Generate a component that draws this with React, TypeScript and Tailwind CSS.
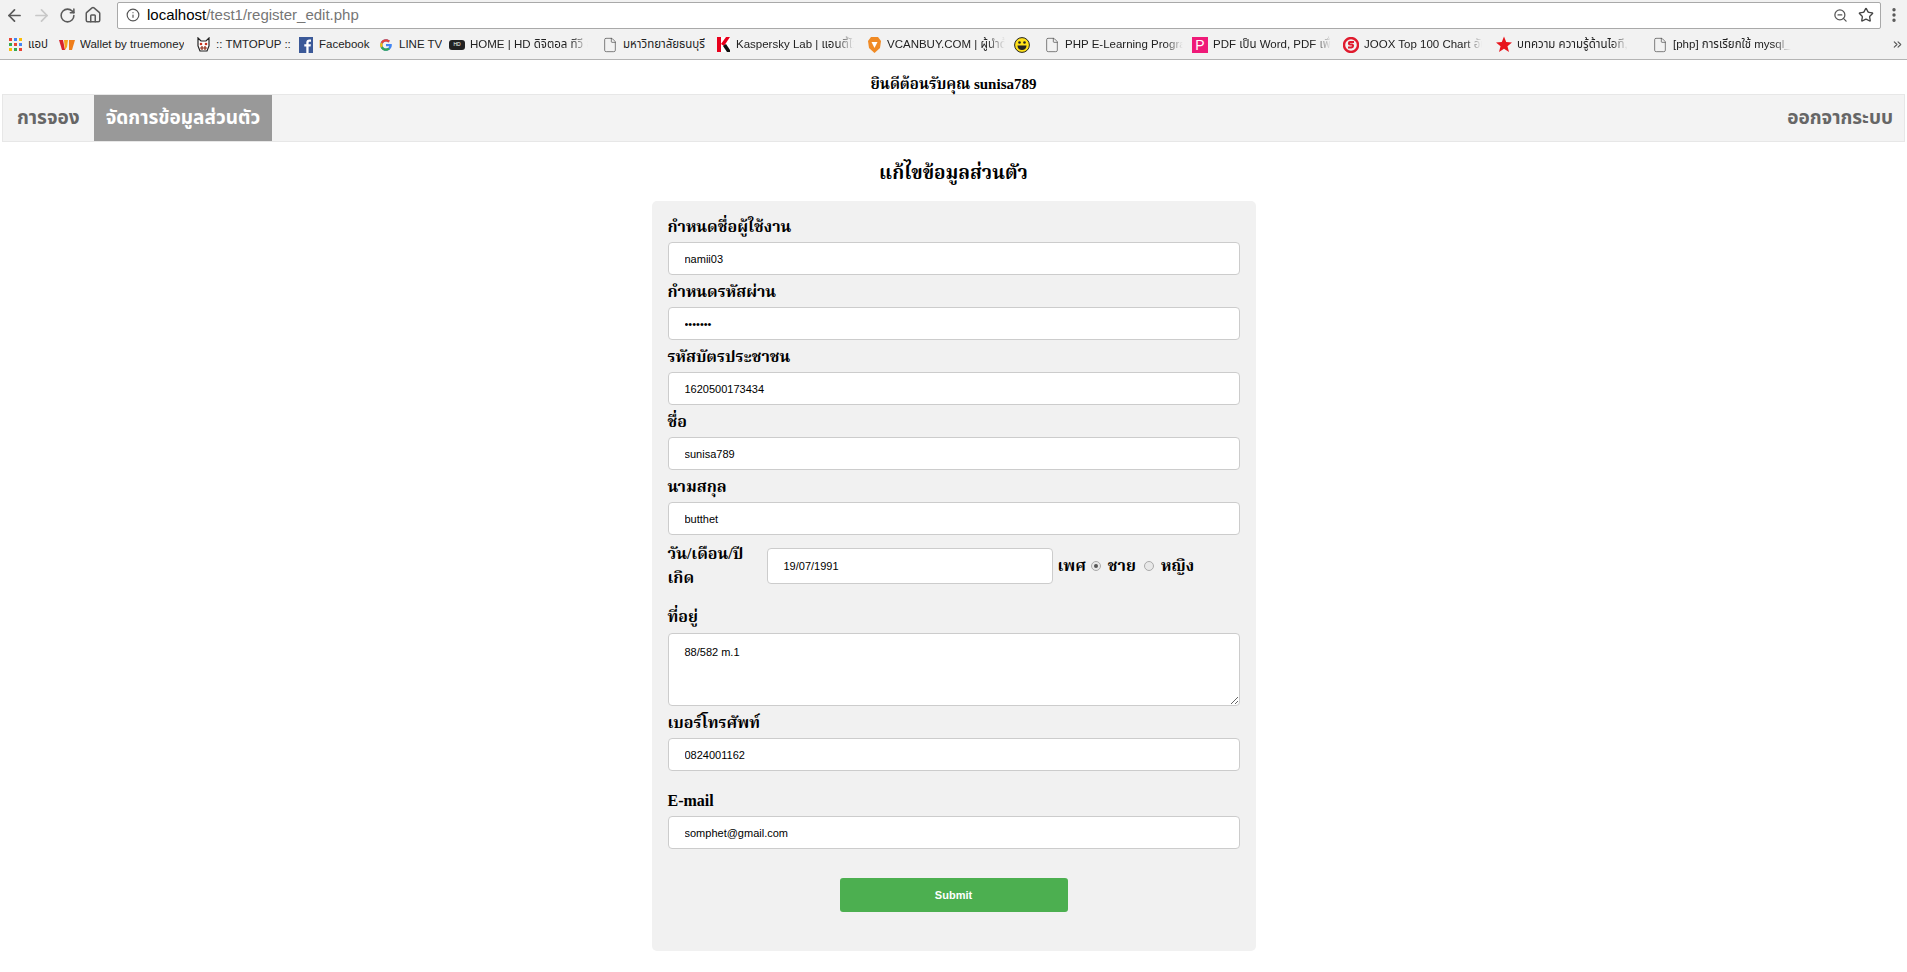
import { ArrowLeft, ArrowRight, RotateCw, Home, Info, ZoomOut, Star, EllipsisVertical, ChevronsRight, File } from "lucide-react";
import type { ReactNode } from "react";

const THAI_SANS = "font-['Tahoma','Liberation_Sans','Noto_Sans_Thai','Noto_Sans',sans-serif]";

function AppsIcon() {
  const colors = ["#ea4335", "#4285f4", "#fbbc05", "#34a853", "#ea4335", "#4285f4", "#fbbc05", "#34a853", "#ea4335"];
  return (
    <span className="grid h-[13px] w-[13px] grid-cols-3 gap-[2px]">
      {colors.map((c, i) => (
        <span key={i} style={{ backgroundColor: c }} />
      ))}
    </span>
  );
}

function WalletIcon() {
  return (
    <svg width="16" height="12" viewBox="0 0 16 12">
      <path d="M0 1h4l2 10H3z" fill="#d8232a" />
      <path d="M5 1h4l-1 7-2 3z" fill="#f6a21d" />
      <path d="M10 1h6l-3 10h-3z" fill="#ef7d1a" />
    </svg>
  );
}

function CatIcon() {
  return (
    <svg width="15" height="16" viewBox="0 0 15 16">
      <path d="M2 1l3 3h5l3-3v8l-2 5H4L2 9z" fill="#fff" stroke="#222" strokeWidth="1.2" />
      <circle cx="5" cy="7" r="1.3" fill="#c8321e" />
      <circle cx="10" cy="7" r="1.3" fill="#c8321e" />
      <path d="M4 11h7M6 9v4M9 9v4" stroke="#8a2a14" strokeWidth="1.2" />
    </svg>
  );
}

function FacebookIcon() {
  return (
    <svg width="14" height="16" viewBox="0 0 14 16">
      <rect width="14" height="16" fill="#3b5998" />
      <path d="M9.6 16V9.6h2l.3-2.4H9.6V5.8c0-.7.2-1.1 1.1-1.1H12V2.6c-.5-.1-1-.1-1.7-.1-1.8 0-3 1.1-3 3v1.7h-2v2.4h2V16z" fill="#fff" />
    </svg>
  );
}

function GoogleIcon() {
  return (
    <svg width="14" height="14" viewBox="0 0 48 48">
      <path d="M43.6 20.5H24v7.5h11.3C33.7 33 29.3 36 24 36c-6.6 0-12-5.4-12-12s5.4-12 12-12c3 0 5.800 1.100 7.900 3l5.700-5.700C34 6 29.300 4 24 4 13 4 4 13 4 24s9 20 20 20 20-9 20-20c0-1.200-.1-2.400-.4-3.500z" fill="#4285f4" />
      <path d="M6.300 14.700l6.600 4.800C14.700 15.100 19 12 24 12c3 0 5.800 1.100 7.900 3l5.700-5.700C34 6 29.300 4 24 4 16.300 4 9.700 8.300 6.300 14.700z" fill="#ea4335" />
      <path d="M24 44c5.200 0 9.800-2 13.300-5.200l-6.200-5.200C29.100 35.100 26.700 36 24 36c-5.300 0-9.700-3.300-11.300-8l-6.500 5C9.500 39.600 16.200 44 24 44z" fill="#34a853" />
      <path d="M6.200 33l6.500-5c-.4-1.300-.7-2.600-.7-4s.3-2.700.7-4l-6.400-4.800C4.800 17.800 4 20.800 4 24s.8 6.300 2.200 9z" fill="#fbbc05" />
    </svg>
  );
}

function LineTvIcon() {
  return (
    <span className="flex h-[10px] w-[16px] items-center justify-center rounded-[3px] bg-[#222] text-[5px] leading-none text-white">
      HD
    </span>
  );
}

function KasperskyIcon() {
  return (
    <svg width="13" height="15" viewBox="0 0 13 15">
      <rect width="13" height="15" fill="#fff" />
      <path d="M0 0h4v15H0z" fill="#e8001c" />
      <path d="M4 7l5-7h4L7 9z" fill="#e8001c" />
      <path d="M6 9l3-2 4 6v2h-3z" fill="#111" />
    </svg>
  );
}

function BraveIcon() {
  return (
    <svg width="13" height="16" viewBox="0 0 13 16">
      <path d="M3 0h7l3 4-1 7-5.500 5L1 11 0 4z" fill="#f08a24" />
      <path d="M3.500 5h6L6.500 11z" fill="#fff" />
    </svg>
  );
}

function SmileIcon() {
  return (
    <svg width="16" height="16" viewBox="0 0 16 16">
      <circle cx="8" cy="8" r="7.400" fill="#ffe11a" stroke="#222" />
      <circle cx="5.500" cy="5.500" r="1.300" fill="#222" />
      <circle cx="10.500" cy="5.500" r="1.300" fill="#222" />
      <path d="M3.500 8.500h9c0 3-2 4.500-4.500 4.500s-4.500-1.500-4.500-4.500z" fill="#222" />
    </svg>
  );
}

function PinkPIcon() {
  return (
    <span className="flex h-4 w-4 items-center justify-center bg-[#ef1a78] font-['Liberation_Sans',sans-serif] text-[14px] leading-none text-white">
      P
    </span>
  );
}

function JooxIcon() {
  return (
    <svg width="16" height="16" viewBox="0 0 16 16">
      <circle cx="8" cy="8" r="7" fill="none" stroke="#e01b2e" strokeWidth="2.400" />
      <path d="M11 5H7c-1.500 0-1.500 2.500 0 2.500h2c1.500 0 1.500 3-.5 3H5" fill="none" stroke="#e01b2e" strokeWidth="2" />
    </svg>
  );
}

function RedStar() {
  return (
    <svg width="17" height="17" viewBox="0 0 24 24">
      <path d="M12 0l3.300 8.400 8.700.5-6.800 5.600 2.300 8.900L12 18.500l-7.500 4.900 2.300-8.900L0 8.900l8.700-.5z" fill="#e8141c" />
    </svg>
  );
}

function DocIcon() {
  return <File size={16} strokeWidth={1} className="text-[#444]" />;
}

type Bookmark = { icon: ReactNode; label: string; width: string; fade?: boolean };

const BOOKMARKS: Bookmark[] = [
  { icon: <AppsIcon />, label: "แอป", width: "w-[52px]" },
  { icon: <WalletIcon />, label: "Wallet by truemoney", width: "w-[136px]" },
  { icon: <CatIcon />, label: ":: TMTOPUP ::", width: "w-[103px]" },
  { icon: <FacebookIcon />, label: "Facebook", width: "w-[80px]" },
  { icon: <GoogleIcon />, label: "LINE TV", width: "w-[71px]" },
  { icon: <LineTvIcon />, label: "HOME | HD ดิจิตอล ทีวี ออนไลน์", width: "w-[153px]", fade: true },
  { icon: <DocIcon />, label: "มหาวิทยาลัยธนบุรี", width: "w-[113px]" },
  { icon: <KasperskyIcon />, label: "Kaspersky Lab | แอนตี้ไวรัส", width: "w-[151px]", fade: true },
  { icon: <BraveIcon />, label: "VCANBUY.COM | ผู้นำด้าน", width: "w-[148px]", fade: true },
  { icon: <SmileIcon />, label: "", width: "w-[30px]" },
  { icon: <DocIcon />, label: "PHP E-Learning Program", width: "w-[148px]", fade: true },
  { icon: <PinkPIcon />, label: "PDF เป็น Word, PDF เพื่อแปลง", width: "w-[151px]", fade: true },
  { icon: <JooxIcon />, label: "JOOX Top 100 Chart อันดับ", width: "w-[153px]", fade: true },
  { icon: <RedStar />, label: "บทความ ความรู้ด้านไอที,", width: "w-[156px]", fade: true },
  { icon: <DocIcon />, label: "[php] การเรียกใช้ mysql_", width: "w-[140px]", fade: true },
];

function BrowserChrome() {
  return (
    <div className={`bg-[#f2f2f2] ${THAI_SANS}`}>
      <div className="flex h-[30px] items-center">
        <div className="flex w-[117px] items-center gap-[8px] pl-[5px] text-[#5a5a5a]">
          <ArrowLeft size={19} strokeWidth={2.2} />
          <ArrowRight size={19} strokeWidth={2.2} className="text-[#c8c8c8]" />
          <RotateCw size={17} strokeWidth={2.2} />
          <Home size={18} strokeWidth={2} />
        </div>
        <div className="flex h-[27px] flex-1 items-center gap-[7px] rounded-[2px] border border-[#a9a9a9] bg-white pl-[8px] pr-[6px]">
          <Info size={14} className="text-[#555]" />
          <span className="flex-1 font-['Liberation_Sans',sans-serif] text-[15px]">
            <span className="text-black">localhost</span>
            <span className="text-[#767676]">/test1/register_edit.php</span>
          </span>
          <ZoomOut size={15} className="text-[#555]" />
          <Star size={16} className="ml-[3px] text-[#444]" />
        </div>
        <div className="flex w-[26px] justify-center">
          <EllipsisVertical size={18} strokeWidth={2.5} className="text-[#555]" />
        </div>
      </div>
      <div className="flex h-[30px] items-center border-b border-[#b4b4b4] pl-[7px]">
        {BOOKMARKS.map((b, i) => (
          <div key={i} className={`flex shrink-0 items-center gap-[5px] ${b.width}`}>
            <span className="flex w-[16px] shrink-0 justify-center">{b.icon}</span>
            {b.label && (
              <span
                className={`overflow-hidden whitespace-nowrap text-[11.5px] text-[#222] ${
                  b.fade ? "max-w-[118px] [mask-image:linear-gradient(to_right,black_85%,transparent)]" : ""
                }`}
              >
                {b.label}
              </span>
            )}
          </div>
        ))}
        <ChevronsRight size={13} className="ml-auto mr-[3px] text-[#555]" />
      </div>
    </div>
  );
}

function Label({ children, className = "" }: { children: ReactNode; className?: string }) {
  return <label className={`block h-[21px] text-[16px] leading-[21px] font-bold text-black ${className}`}>{children}</label>;
}

function TextField({ value, type = "text" }: { value: string; type?: string }) {
  return (
    <input
      type={type}
      readOnly
      defaultValue={value}
      className="mt-[5px] mb-[6px] block h-[33px] w-full rounded-[4px] border border-[#ccc] bg-white px-[16px] font-['Liberation_Sans',sans-serif] text-[11px] text-black"
    />
  );
}

function Radio({ checked }: { checked?: boolean }) {
  return (
    <span className="mx-[5px] flex h-[10px] w-[10px] items-center justify-center rounded-full border border-[#aaa] bg-[#e8e8e8]">
      {checked && <span className="h-[4px] w-[4px] rounded-full bg-[#555]" />}
    </span>
  );
}

export default function App() {
  return (
    <div className="h-[972px] overflow-hidden bg-white font-['Liberation_Serif','Noto_Serif_Thai','Noto_Sans_Thai',serif]">
      <BrowserChrome />

      <p className="h-[34px] pt-[15px] text-center text-[15px] leading-[19px] font-bold text-black">ยินดีต้อนรับคุณ sunisa789</p>

      <nav className={`mx-[2px] flex h-[48px] border border-[#e7e7e7] bg-[#f3f3f3] text-[19px] font-bold text-[#666] ${THAI_SANS}`}>
        <a className="flex items-center px-[14px]">การจอง</a>
        <a className="flex items-center bg-[#999] px-[12px] text-white">จัดการข้อมูลส่วนตัว</a>
        <a className="ml-auto flex items-center px-[11px]">ออกจากระบบ</a>
      </nav>

      <h2 className="mt-[18px] text-center text-[19px] leading-[26px] font-bold text-black">แก้ไขข้อมูลส่วนตัว</h2>

      <form className="mx-auto mt-[15px] h-[750px] w-[604px] rounded-[5px] bg-[#f1f1f1] px-[16px] pt-[15px]">
        <Label>กำหนดชื่อผู้ใช้งาน</Label>
        <TextField value="namii03" />
        <Label>กำหนดรหัสผ่าน</Label>
        <TextField value="1234567" type="password" />
        <Label>รหัสบัตรประชาชน</Label>
        <TextField value="1620500173434" />
        <Label>ชื่อ</Label>
        <TextField value="sunisa789" />
        <Label>นามสกุล</Label>
        <TextField value="butthet" />

        <div className="mt-[13px] flex h-[36px] items-center text-[16px] font-bold text-black">
          <span className="w-[99px]">วัน/เดือน/ปีเกิด</span>
          <input
            readOnly
            defaultValue="19/07/1991"
            className="h-[36px] w-[286px] rounded-[4px] border border-[#ccc] bg-white px-[16px] font-['Liberation_Sans',sans-serif] text-[11px] font-normal text-black"
          />
          <span className="ml-[5px]">เพศ</span>
          <Radio checked />
          <span className="ml-[2px]">ชาย</span>
          <span className="w-[3px]" />
          <Radio />
          <span className="ml-[2px]">หญิง</span>
        </div>

        <Label className="mt-[22px]">ที่อยู่</Label>
        <textarea
          readOnly
          defaultValue="88/582 m.1"
          className="mt-[6px] mb-[6px] block h-[73px] w-full rounded-[4px] border border-[#ccc] bg-white px-[16px] py-[10px] font-['Liberation_Sans',sans-serif] text-[11px] text-black"
        />
        <Label>เบอร์โทรศัพท์</Label>
        <TextField value="0824001162" />
        <Label className="mt-[19px]">E-mail</Label>
        <TextField value="somphet@gmail.com" />

        <button
          type="button"
          className="mx-auto mt-[29px] block h-[34px] w-[228px] rounded-[3px] bg-[#4caf50] font-['Liberation_Sans',sans-serif] text-[11px] font-bold text-white"
        >
          Submit
        </button>
      </form>
    </div>
  );
}
